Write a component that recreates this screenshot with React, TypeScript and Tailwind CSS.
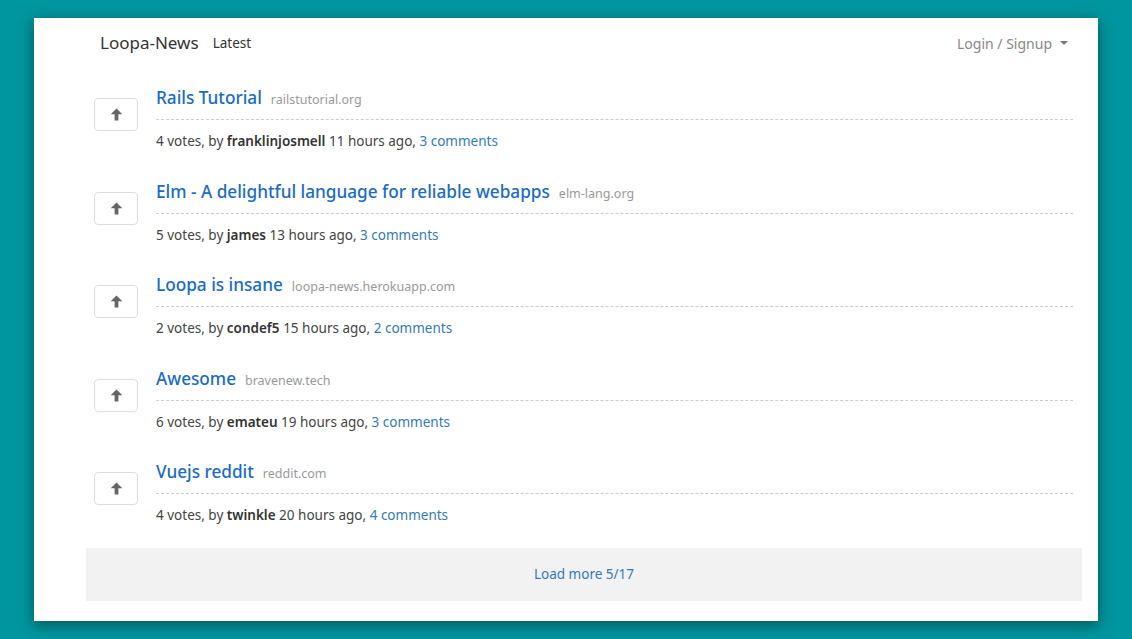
type Post = {
  id: number;
  title: string;
  domain: string;
  votes: number;
  author: string;
  ago: string;
  comments: number;
};

const posts: Post[] = [
  { id: 1, title: "Rails Tutorial", domain: "railstutorial.org", votes: 4, author: "franklinjosmell", ago: "11 hours ago", comments: 3 },
  { id: 2, title: "Elm - A delightful language for reliable webapps", domain: "elm-lang.org", votes: 5, author: "james", ago: "13 hours ago", comments: 3 },
  { id: 3, title: "Loopa is insane", domain: "loopa-news.herokuapp.com", votes: 2, author: "condef5", ago: "15 hours ago", comments: 2 },
  { id: 4, title: "Awesome", domain: "bravenew.tech", votes: 6, author: "emateu", ago: "19 hours ago", comments: 3 },
  { id: 5, title: "Vuejs reddit", domain: "reddit.com", votes: 4, author: "twinkle", ago: "20 hours ago", comments: 4 },
];

const PostItem = ({ post }: { post: Post }) => {
  return (
    <div className="flex pl-2 pr-[9px]">
      <button className="mt-[12px] w-[44px] h-[33px] flex items-center justify-center border border-[#ddd] rounded bg-white shrink-0">
        {/* solid up arrow, glyphicon style */}
        <svg width="13" height="13" viewBox="0 0 13 13" fill="#666">
          <path d="M6.5 0.5 L12.3 6.3 L8.4 6.3 L8.4 12.5 L4.6 12.5 L4.6 6.3 L0.7 6.3 Z" />
        </svg>
      </button>
      <div className="flex-1 ml-[18px]">
        <div className="h-[34px] flex items-baseline gap-[9px] border-b border-dashed border-[#ccc] leading-[24px] overflow-hidden">
          <a className="text-[17.2px] text-[#1a6bc4] font-medium">{post.title}</a>
          <span className="text-[12.5px] text-[#999]">{post.domain}</span>
        </div>
        <div className="mt-[11px] h-[20px] text-[13.5px] leading-[20px] text-[#444]">
          {post.votes} votes, by{" "}
          <span className="font-semibold text-[#333]">{post.author}</span>{" "}
          {post.ago},{" "}
          <a className="text-[#337ab7]">{post.comments} comments</a>
        </div>
      </div>
    </div>
  );
};

export default function App() {
  return (
    <div
      className="w-[1132px] h-[639px] bg-[#00969f] pt-[18px] pl-[34px] overflow-hidden"
      style={{ fontFamily: '"Noto Sans", "Open Sans", sans-serif' }}
    >
      <div className="w-[1064px] h-[603px] bg-white shadow-[0_4px_14px_rgba(0,0,0,0.45)] pl-[52px] pr-[16px]">
        <nav className="h-[50px] flex items-center justify-between px-[14px]">
          <div className="flex items-center gap-[14px]">
            <span className="text-[17px] text-[#333]">Loopa-News</span>
            <span className="text-[13.5px] text-[#333]">Latest</span>
          </div>
          <div className="flex items-center gap-[8px] text-[14px] text-[#888]">
            <span>Login / Signup</span>
            <span className="w-0 h-0 border-l-[4px] border-r-[4px] border-t-[4px] border-l-transparent border-r-transparent border-t-[#777]" />
          </div>
        </nav>
        <div className="pt-[18px] flex flex-col gap-[28.5px]">
          {posts.map((post) => (
            <PostItem key={post.id} post={post} />
          ))}
        </div>
        <div className="mt-[23px] h-[53px] bg-[#f2f2f2] flex items-center justify-center">
          <a className="text-[13.5px] text-[#337ab7]">Load more 5/17</a>
        </div>
      </div>
    </div>
  );
}
